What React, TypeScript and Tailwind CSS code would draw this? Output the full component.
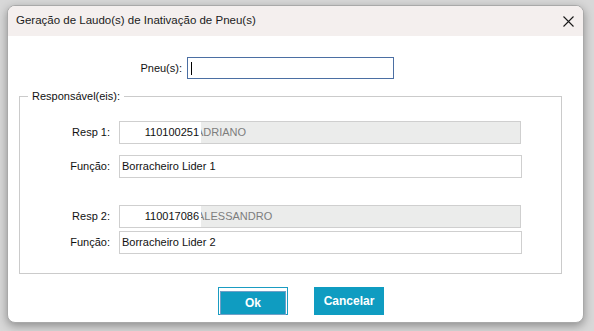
export default function App() {
  const label = "font-['Liberation_Sans',Arial,sans-serif] text-[11px] text-[#111]";
  const box = "h-[23px] border border-[#cfcfcf] flex items-center font-['Liberation_Sans',Arial,sans-serif] text-[11px]";

  return (
    <div className="w-[594px] h-[331px] bg-[#d8d8d8] pt-[5px] pl-[7px] overflow-hidden">
      <div className="w-[577px] h-[318px] bg-white rounded-lg border border-[#a9a9a9] shadow-[0_3px_10px_rgba(0,0,0,0.35)] flex flex-col overflow-hidden">
        <div className="h-[30px] shrink-0 bg-[#f4efee] flex items-center justify-between pl-[8px] pr-[9px]">
          <span className="font-['Liberation_Sans',Arial,sans-serif] text-[11.5px] text-[#1b1b1b]">
            Geração de Laudo(s) de Inativação de Pneu(s)
          </span>
          <svg width="11" height="11" viewBox="0 0 11 11" className="mt-px">
            <path d="M0.5 0.5 L10.5 10.5 M10.5 0.5 L0.5 10.5" stroke="#1a1a1a" strokeWidth="1.1" />
          </svg>
        </div>

        <div className="flex items-center mt-[21px]">
          <span className={`${label} w-[174px] text-right`}>Pneu(s):</span>
          <div className="ml-[5px] w-[207px] h-[22px] border border-[#4b6fa3] flex items-center pl-[3px]">
            <span className="w-px h-[13px] bg-black" />
          </div>
        </div>

        <fieldset className="mt-[11px] ml-[11px] w-[543px] h-[184px] border border-[#cbcbcb] px-0 pb-[18px]">
          <legend className={`${label} ml-[8px] px-[4px] leading-[13px]`}>Responsável(eis):</legend>

          <div className="flex flex-col mt-[18px]">
            <div className="flex items-center">
              <span className={`${label} w-[90px] text-right`}>Resp 1:</span>
              <div className="ml-[9px] flex">
                <div className={`${box} w-[83px] justify-end pr-[2px] text-[#111] bg-white`}>110100251</div>
                <div className={`${box} w-[320px] -ml-px bg-[#ebeceb] overflow-hidden text-[#7d7d7d] border-l-0`}>
                  <span className="-ml-[5px]">ADRIANO</span>
                </div>
              </div>
            </div>
            <div className="flex items-center mt-[11px]">
              <span className={`${label} w-[90px] text-right`}>Função:</span>
              <div className={`${box} ml-[9px] w-[403px] pl-[2px] text-[#111]`}>Borracheiro Lider 1</div>
            </div>

            <div className="flex items-center mt-[27px]">
              <span className={`${label} w-[90px] text-right`}>Resp 2:</span>
              <div className="ml-[9px] flex">
                <div className={`${box} w-[83px] justify-end pr-[2px] text-[#111] bg-white`}>110017086</div>
                <div className={`${box} w-[320px] -ml-px bg-[#ebeceb] overflow-hidden text-[#7d7d7d] border-l-0`}>
                  <span className="-ml-[4px]">ALESSANDRO</span>
                </div>
              </div>
            </div>
            <div className="flex items-center mt-[3px]">
              <span className={`${label} w-[90px] text-right`}>Função:</span>
              <div className={`${box} ml-[9px] w-[403px] pl-[2px] text-[#111]`}>Borracheiro Lider 2</div>
            </div>
          </div>
        </fieldset>

        <div className="flex mt-[13px] pl-[210px] gap-[26px]">
          <div className="w-[70px] h-[28px] border border-[#1a9cc2] p-px bg-white">
            <button className="w-full h-full border border-[#6f9fc6] bg-[#0f9cc1] text-white font-bold text-[12px] font-['Liberation_Sans',Arial,sans-serif]">
              Ok
            </button>
          </div>
          <button className="w-[70px] h-[28px] bg-[#0f9cc1] text-white font-bold text-[12px] font-['Liberation_Sans',Arial,sans-serif]">
            Cancelar
          </button>
        </div>
      </div>
    </div>
  );
}
